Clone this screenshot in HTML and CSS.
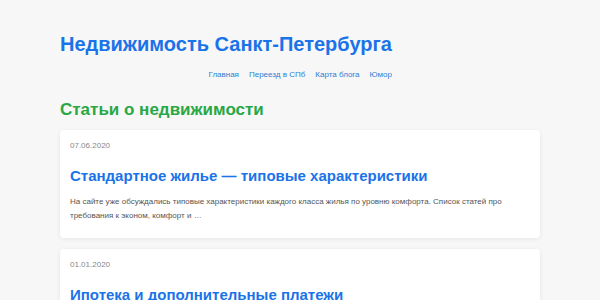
FILE: index.html
```html
<!DOCTYPE html>
<html lang="ru">
<head>
    <meta charset="UTF-8">
    <meta name="viewport" content="width=device-width, initial-scale=1.0">
    <title>Недвижимость Санкт-Петербурга</title>
    <link rel="stylesheet" href="styles.css">
</head>
<body>
    <div class="container">
        <div class="header">
            <h1>Недвижимость Санкт-Петербурга</h1>
            <nav class="menu">
                <a href="#">Главная</a>
                <a href="#">Переезд в СПб</a>
                <a href="#">Карта блога</a>
                <a href="#">Юмор</a>
            </nav>
        </div>

        <h2 class="section-title">Статьи о недвижимости</h2>

        <div class="post-list">
            <div class="post-card">
                <div class="post-date">07.06.2020</div>
                <h3><a href="#">Стандартное жилье — типовые характеристики</a></h3>
                <p>На сайте уже обсуждались типовые характеристики каждого класса жилья по уровню комфорта. Список статей про требования к эконом, комфорт и …</p>
            </div>
            <div class="post-card">
                <div class="post-date">01.01.2020</div>
                <h3><a href="#">Ипотека и дополнительные платежи</a></h3>
                <p>Кроме самого кредита покупателю приходится оплачивать страховку, оценку и другие услуги.</p>
            </div>
        </div>
    </div>
</body>
</html>
```

FILE: styles.css
```css
body {
    font-family: "Liberation Sans", Arial, sans-serif;
    background-color: #f7f7f7;
    margin: 0;
    padding: 0;
    color: #555;
}
a {
    text-decoration: none;
}
.container {
    width: 480px;
    margin: 0 auto;
    padding-top: 32px;
}
.header {
    display: inline-flex;
    flex-direction: column;
    align-items: flex-end;
}
.header h1 {
    margin: 0;
    font-size: 20px;
    line-height: 24px;
    color: #1a73e8;
}
.menu {
    display: flex;
    gap: 10px;
    margin-top: 14px;
}
.menu a {
    font-size: 8px;
    line-height: 10px;
    color: #2a7fd4;
}
.section-title {
    margin: 20px 0 10px;
    font-size: 17px;
    line-height: 20px;
    color: #28a745;
}
.post-list {
    display: flex;
    flex-direction: column;
    gap: 11px;
}
.post-card {
    background-color: white;
    border-radius: 4px;
    box-shadow: 0 1px 4px rgba(0,0,0,0.08);
    padding: 11px 10px 15px;
}
.post-date {
    font-size: 8px;
    line-height: 10px;
    color: #888;
}
.post-card h3 {
    margin: 16px 0 10px;
    font-size: 15px;
    line-height: 18px;
}
.post-card h3 a {
    color: #1a73e8;
}
.post-card p {
    margin: 0;
    font-size: 8px;
    line-height: 14px;
    color: #555;
}
```
